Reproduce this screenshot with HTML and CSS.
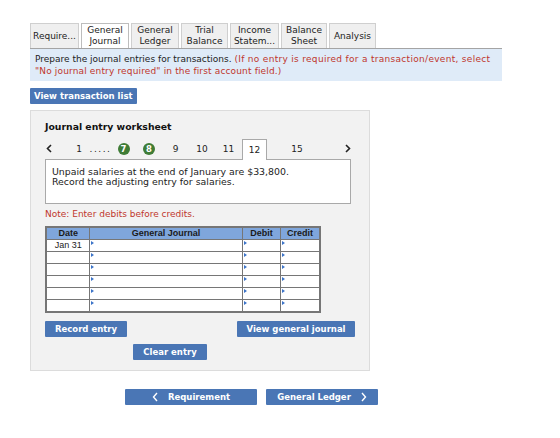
FILE: index.html
```html
<!DOCTYPE html>
<html lang="en">
<head>
  <meta charset="UTF-8" />
  <title>Journal entry worksheet</title>
  <link rel="stylesheet" href="styles.css">
</head>
<body>
<div class="page">

  <div class="tabs">
    <div class="tab w49">Require...</div>
    <div class="tab w48 active">General<br>Journal</div>
    <div class="tab w48">General<br>Ledger</div>
    <div class="tab w47">Trial<br>Balance</div>
    <div class="tab w49">Income<br>Statem...</div>
    <div class="tab w46">Balance<br>Sheet</div>
    <div class="tab w47">Analysis</div>
  </div>

  <div class="info">
    <div>Prepare the journal entries for transactions. <span class="red wide">(If no entry is required for a transaction/event, select</span></div>
    <div class="red">"No journal entry required" in the first account field.)</div>
  </div>

  <div class="btn-row">
    <button class="btn">View transaction list</button>
  </div>

  <div class="panel">
    <div class="panel-title">Journal entry worksheet</div>

    <div class="nav">
      <div class="nav-item prev">
        <svg width="6" height="9" viewBox="0 0 6 9"><polyline points="5,1 1.5,4.5 5,8" fill="none" stroke="#222" stroke-width="1.6"/></svg>
      </div>
      <div class="nav-item n22">1</div>
      <div class="nav-item n21 dots">.....</div>
      <div class="nav-item n25"><span class="done">7</span></div>
      <div class="nav-item n26"><span class="done">8</span></div>
      <div class="nav-item n27">9</div>
      <div class="nav-item n26">10</div>
      <div class="nav-item n27">11</div>
      <div class="nav-item current">12</div>
      <div class="nav-item n60">15</div>
      <div class="nav-item next">
        <svg width="6" height="9" viewBox="0 0 6 9"><polyline points="1,1 4.5,4.5 1,8" fill="none" stroke="#222" stroke-width="1.6"/></svg>
      </div>
    </div>

    <div class="question">
      Unpaid salaries at the end of January are $33,800.<br>
      Record the adjusting entry for salaries.
    </div>

    <div class="note">Note: Enter debits before credits.</div>

    <table class="journal">
      <tr>
        <th class="c-date">Date</th>
        <th class="c-acct">General Journal</th>
        <th class="c-num">Debit</th>
        <th class="c-num">Credit</th>
      </tr>
      <tr><td class="c-date">Jan 31</td><td class="mark"></td><td class="mark"></td><td class="mark"></td></tr>
      <tr><td></td><td class="mark"></td><td class="mark"></td><td class="mark"></td></tr>
      <tr><td></td><td class="mark"></td><td class="mark"></td><td class="mark"></td></tr>
      <tr><td></td><td class="mark"></td><td class="mark"></td><td class="mark"></td></tr>
      <tr><td></td><td class="mark"></td><td class="mark"></td><td class="mark"></td></tr>
      <tr><td></td><td class="mark"></td><td class="mark"></td><td class="mark"></td></tr>
    </table>

    <div class="actions">
      <button class="btn w82">Record entry</button>
      <button class="btn w118">View general journal</button>
    </div>
    <div class="clear-row">
      <button class="btn w74">Clear entry</button>
    </div>
  </div>

  <div class="bottom-nav">
    <button class="btn big w132">
      <svg width="6" height="10" viewBox="0 0 6 10"><polyline points="5,1 1.5,5 5,9" fill="none" stroke="#fff" stroke-width="1.4"/></svg>
      <span>Requirement</span>
    </button>
    <button class="btn big w112">
      <span>General Ledger</span>
      <svg width="6" height="10" viewBox="0 0 6 10"><polyline points="1,1 4.5,5 1,9" fill="none" stroke="#fff" stroke-width="1.4"/></svg>
    </button>
  </div>

</div>
</body>
</html>
```

FILE: styles.css
```css
html, body {
  margin: 0;
  padding: 0;
  background: #fff;
  color: #222;
  font-family: "DejaVu Sans", Verdana, sans-serif;
  font-size: 9px;
}

.page {
  padding: 23px 0 0 30px;
}

/* tabs */
.tabs {
  display: flex;
  gap: 2px;
  height: 25px;
}

.tab {
  box-sizing: border-box;
  height: 25px;
  background: #efefef;
  border: 1px solid #cfcfcf;
  border-bottom: none;
  display: flex;
  align-items: center;
  justify-content: center;
  text-align: center;
  line-height: 11px;
  color: #222;
}

.tab.active {
  background: #fff;
  border-color: #bdbdbd;
}

.w46 { width: 46px; }
.w47 { width: 47px; }
.w48 { width: 48px; }
.w49 { width: 49px; }

.info {
  box-sizing: border-box;
  width: 472px;
  height: 33px;
  background: #dfebf8;
  border-top: 1px solid #a4a4a4;
  padding: 4px 5px;
  line-height: 12px;
  white-space: nowrap;
}

.red {
  color: #c0362c;
  letter-spacing: 0.15px;
}

.red.wide {
  letter-spacing: 0.3px;
}

/* buttons */
.btn-row {
  margin-top: 7px;
}

.btn {
  box-sizing: border-box;
  height: 16px;
  padding: 0 4px;
  border: none;
  border-radius: 1px;
  background: #4a76b5;
  color: #fff;
  font-family: "DejaVu Sans", Verdana, sans-serif;
  font-size: 8.5px;
  font-weight: bold;
  cursor: pointer;
}

.w74 { width: 74px; }
.w82 { width: 82px; }
.w112 { width: 112px; }
.w118 { width: 118px; }
.w132 { width: 132px; }

/* worksheet */
.panel {
  box-sizing: border-box;
  width: 340px;
  height: 261px;
  margin-top: 6px;
  padding: 10px 14px 0 14px;
  background: #f2f2f2;
  border: 1px solid #dcdcdc;
}

.panel-title {
  font-weight: bold;
  font-size: 9.3px;
  line-height: 12px;
  color: #111;
}

.nav {
  display: flex;
  align-items: flex-end;
  height: 20px;
  margin-top: 6px;
  width: 306px;
}

.nav-item {
  box-sizing: border-box;
  height: 20px;
  display: flex;
  align-items: center;
  justify-content: center;
  color: #222;
}

.dots {
  letter-spacing: 1.5px;
}

.n21 { width: 21px; }
.n22 { width: 22px; }
.n25 { width: 25px; }
.n26 { width: 26px; }
.n27 { width: 27px; }
.n60 { width: 60px; }

.prev {
  width: 23px;
  justify-content: flex-start;
  padding: 0 0 2px 1px;
}

.next {
  width: 24px;
  justify-content: flex-end;
  padding: 0 0 2px 0;
}

.done {
  width: 12px;
  height: 12px;
  border-radius: 50%;
  background: #3f7c36;
  color: #fff;
  font-weight: bold;
  font-size: 8.5px;
  line-height: 12px;
  text-align: center;
}

.current {
  width: 25px;
  height: 21px;
  margin-bottom: -1px;
  background: #fff;
  border: 1px solid #a9a9a9;
  border-bottom: none;
  position: relative;
  z-index: 1;
}

.question {
  box-sizing: border-box;
  width: 306px;
  height: 45px;
  background: #fff;
  border: 1px solid #a9a9a9;
  padding: 7px 6px;
  font-size: 9.4px;
  line-height: 10px;
}

.note {
  color: #c0362c;
  line-height: 12px;
  margin-top: 4px;
}

/* journal table */
.journal {
  margin-top: 6px;
  border-collapse: collapse;
  width: 276px;
  font-family: "Liberation Sans", Arial, sans-serif;
  font-size: 9px;
  border: 2px solid #767676;
}

.journal th,
.journal td {
  height: 11px;
  padding: 0;
  border: 1px solid #767676;
  line-height: 11px;
}

.journal th {
  background: #7fa6dc;
  color: #1a1a1a;
  font-weight: bold;
}

.journal td {
  background: #fff;
}

.journal .c-date { width: 43px; text-align: center; }
.journal .c-acct { width: 154px; }
.journal .c-num { width: 38px; }

.journal th.c-acct,
.journal th.c-num {
  text-align: center;
}

.journal td.mark {
  position: relative;
}

.journal td.mark::before {
  content: "";
  position: absolute;
  left: 1px;
  top: 1px;
  border-left: 3px solid #3b73c8;
  border-top: 2px solid transparent;
  border-bottom: 2px solid transparent;
}

.actions {
  display: flex;
  justify-content: space-between;
  margin-top: 8px;
  width: 310px;
}

.clear-row {
  margin-top: 7px;
  padding-left: 88px;
}

/* bottom navigation */
.bottom-nav {
  display: flex;
  gap: 9px;
  margin: 18px 0 0 95px;
}

.btn.big {
  display: flex;
  align-items: center;
  justify-content: center;
  gap: 10px;
}
```
